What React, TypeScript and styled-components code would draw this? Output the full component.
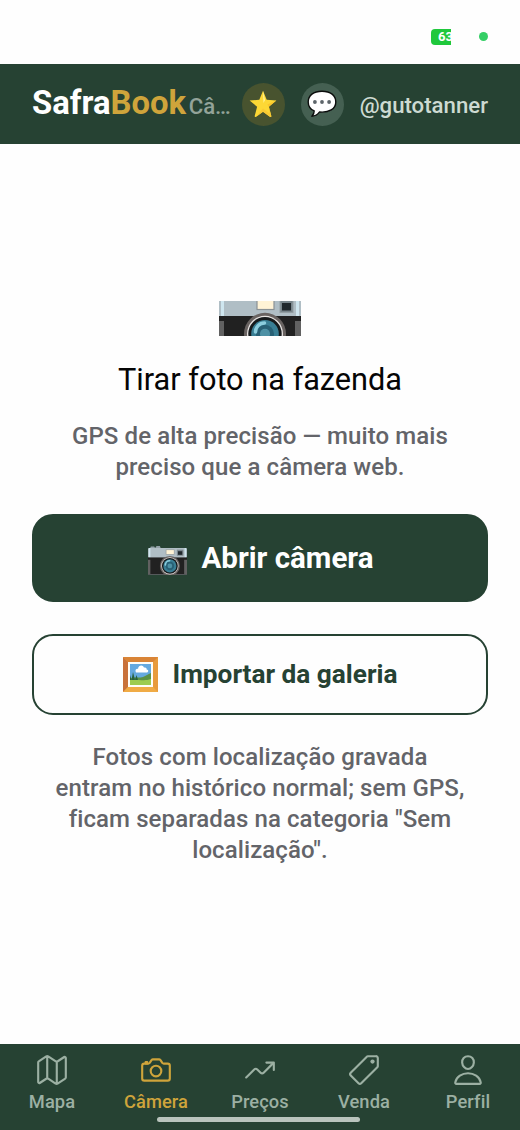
import React from 'react';
import styled, { createGlobalStyle } from 'styled-components';
import {
  IoMapOutline,
  IoCameraOutline,
  IoTrendingUpOutline,
  IoPricetagOutline,
  IoPersonOutline,
} from 'react-icons/io5';

const green = '#264233';
const gold = '#cfa43b';
const muted = '#9cb0a3';

const GlobalStyle = createGlobalStyle`
  * { box-sizing: border-box; }
  body { margin: 0; background: #fefefe; font-family: Roboto, 'Liberation Sans', sans-serif; }
`;

const Screen = styled.div`
  width: 520px;
  height: 1130px;
  display: flex;
  flex-direction: column;
  background: #fefefe;
  overflow: hidden;
`;

const StatusBar = styled.div`
  height: 64px;
  flex: none;
  display: flex;
  align-items: center;
  justify-content: flex-end;
  gap: 28px;
  padding: 9px 32px 0 0;
`;

const Battery = styled.div`
  width: 20px;
  height: 16px;
  padding-left: 7px;
  border-radius: 4px 0 0 4px;
  background: #1fc83c;
  color: #fff;
  font-size: 13px;
  font-weight: 700;
  line-height: 16px;
  overflow: hidden;
  white-space: nowrap;
`;

const PrivacyDot = styled.div`
  width: 9px;
  height: 9px;
  border-radius: 50%;
  background: #35cf66;
`;

const Header = styled.header`
  height: 80px;
  flex: none;
  display: flex;
  align-items: center;
  padding: 0 32px;
  background: ${green};
  white-space: nowrap;
`;

const Brand = styled.div`
  width: 155px;
  margin-top: -2px;
  color: #fff;
  font-size: 32.8px;
  font-weight: 700;
  line-height: 40px;
`;

const BrandAccent = styled.span`
  color: ${gold};
`;

const Section = styled.div`
  width: 55px;
  flex: none;
  padding-left: 2px;
  color: #93a399;
  font-size: 22.2px;
  font-weight: 500;
  line-height: 30px;
  margin-top: 3px;
`;

const RoundButton = styled.button<{ $tint: string }>`
  width: 43px;
  height: 43px;
  flex: none;
  display: flex;
  align-items: center;
  justify-content: center;
  margin: 0 16px 0 0;
  padding: 0;
  border: 0;
  border-radius: 50%;
  background: ${(p) => p.$tint};
`;

const Handle = styled.div`
  margin: 1px 0 0 auto;
  color: #cddad2;
  font-size: 22.2px;
  font-weight: 500;
  line-height: 30px;
`;

const Main = styled.main`
  height: 900px;
  flex: none;
  display: flex;
  flex-direction: column;
  align-items: center;
  padding: 157px 32px 0;
`;

const Hero = styled.div`
  height: 35px;
  display: flex;
`;

const Title = styled.h1`
  margin: 24px 0 0;
  font-size: 30.7px;
  font-weight: 400;
  line-height: 40px;
  color: #050505;
`;

const Copy = styled.p<{ $top: number }>`
  margin: ${(p) => p.$top}px 0 0;
  color: #636469;
  font-size: 24px;
  font-weight: 500;
  letter-spacing: 0.09px;
  line-height: 30.7px;
  text-align: center;
  white-space: nowrap;
`;

const Action = styled.button<{ $outlined?: boolean }>`
  width: 456px;
  height: ${(p) => (p.$outlined ? 81 : 88)}px;
  flex: none;
  display: flex;
  align-items: center;
  justify-content: center;
  gap: 15px;
  margin: 32px 0 0;
  padding: ${(p) => (p.$outlined ? '0 0 1px' : '0 0 0 1px')};
  border: 2px solid ${green};
  border-radius: 21px;
  background: ${(p) => (p.$outlined ? '#fefefe' : green)};
  color: ${(p) => (p.$outlined ? green : '#fff')};
  font-family: inherit;
  font-size: ${(p) => (p.$outlined ? 26.2 : 29.5)}px;
  font-weight: 700;
`;

const ActionIcon = styled.span`
  display: flex;
  padding-top: 4px;
`;

const Nav = styled.nav`
  position: relative;
  height: 86px;
  flex: none;
  display: flex;
  background: ${green};
`;

const Tab = styled.div<{ $active?: boolean }>`
  width: 104px;
  display: flex;
  flex-direction: column;
  align-items: center;
  padding-top: 9px;
  color: ${(p) => (p.$active ? gold : muted)};
  font-size: 18.3px;
  font-weight: 500;
  letter-spacing: 0.1px;
  line-height: 24px;
  svg { margin-bottom: 3px; }
`;

const HomeIndicator = styled.div`
  position: absolute;
  left: 157px;
  top: 73px;
  width: 203px;
  height: 5px;
  border-radius: 3px;
  background: #b9c4bd;
`;

function Camera({ width, height, viewBox }: { width: number; height: number; viewBox: string }) {
  return (
    <svg width={width} height={height} viewBox={viewBox}>
      <path d="M4 5 6 1h7l2 3 3-4h7l2 5z" fill="#93a1a8" />
      <rect y="4" width="82" height="21" rx="2" fill="#b0bec5" />
      <path d="M2 4h3v20H2zM77 4h3v20h-3z" fill="#cfe6ef" />
      <rect y="24" width="82" height="37" fill="#212121" />
      <path d="M0 29h5v30H0zM76 29h6v30h-6z" fill="#616161" />
      <path d="M0 59h82v3H0z" fill="#55595b" />
      <rect x="38" y="8" width="17" height="9.5" fill="#fff3d6" stroke="#8b9295" strokeWidth="1.2" />
      <rect x="61" y="8" width="13" height="12.5" fill="#78858b" stroke="#929da2" />
      <rect x="63" y="11" width="9" height="7.5" fill="#20282c" />
      <circle cx="46" cy="41.8" r="21" fill="#696361" />
      <circle cx="46" cy="41.8" r="18" fill="#e9e5e3" />
      <circle cx="46" cy="41.8" r="16.7" fill="#161a1c" />
      <circle cx="46" cy="41.8" r="13.8" fill="#397e94" />
      <circle cx="46" cy="41.8" r="9" fill="#286075" />
      <circle cx="46" cy="41.8" r="5" fill="#4e91a5" />
      <path d="M36.5 40c0-5 4-9 9-9" fill="none" stroke="#8ccddd" strokeWidth="3.5" strokeLinecap="round" />
    </svg>
  );
}

function Star() {
  return (
    <svg width="28" height="28" viewBox="0 0 28 28">
      <path d="m14 .8 3.700 9 9.700.7-7.500 6.200 2.400 9.400c.2.8-.5 1.200-1.100.8L14 21.700l-7.200 5.200c-.6.4-1.300-.1-1.100-.8l2.400-9.400L.6 10.500l9.700-.7z" fill="#fdd835" />
      <path d="m14 1 2 9-1.500 3z" fill="#fff59d" />
      <path d="m19.900 16.700 2.400 9.400c.2.8-.5 1.200-1.100.8L14 21.700l-7.200 5.200 7.200-8.500 6.500 5z" fill="#f9c933" />
      <path d="m27.200 10.600-7.300 6.100-1.600-2.200z" fill="#f9c52c" />
    </svg>
  );
}

function Bubble() {
  return (
    <svg width="30" height="28" viewBox="0 0 30 28">
      <path
        d="M15 1.200C6.500 1.200 1.200 5.500 1.200 11.900c0 4 2.200 7.300 6 9 .1 2-.8 3.800-2.300 5.300 3.300-.3 6-1.800 7.500-4.200 9.600 1 16.400-3.200 16.400-10.100C28.800 5.500 23.500 1.200 15 1.200z"
        fill="#fff" stroke="#0b0d0c" strokeWidth="1.4" strokeLinejoin="round"
      />
      <circle cx="7.900" cy="12" r="1.900" fill="#5d656a" />
      <circle cx="15" cy="12" r="1.900" fill="#5d656a" />
      <circle cx="22.100" cy="12" r="1.900" fill="#5d656a" />
    </svg>
  );
}

function FramedPicture() {
  return (
    <svg width="35" height="35" viewBox="0 0 35 35">
      <path d="M0 0h35v35H0z" fill="#e89b3c" />
      <path d="M0 0l5 5v25l-5 5z" fill="#c9713a" />
      <path d="M0 0h35l-5 5H5z" fill="#d98436" />
      <path d="M0 35h35l-5-5H5z" fill="#f0ab45" />
      <path d="M5 5h25v25H5z" fill="#fffdf7" />
      <path d="M7 7h21v21H7z" fill="#65a9df" />
      <path d="M13 15.500c-1.500-3 1-4 2-3.600.5-4 5-4.300 6-1.300 2-.8 3 1 2.600 2 2.400.2 2 3 0 3z" fill="#fff" />
      <path d="M7 21c7-1 10 0 13-1s5-3 8-4v12H7z" fill="#5b9145" />
      <path d="M7 23c7-2 12 2 21-1v6H7z" fill="#9ccc50" />
      <path d="m7 23 0-5 1.500 5zM8.500 23 10 15l2 8zM12 23l1.500-5 1.500 5z" fill="#27613f" />
    </svg>
  );
}

const tabs = [
  { label: 'Mapa', Icon: IoMapOutline },
  { label: 'Câmera', Icon: IoCameraOutline, active: true },
  { label: 'Preços', Icon: IoTrendingUpOutline },
  { label: 'Venda', Icon: IoPricetagOutline },
  { label: 'Perfil', Icon: IoPersonOutline },
];

export default function App() {
  return (
    <Screen>
      <GlobalStyle />
      <StatusBar>
        <Battery>63</Battery>
        <PrivacyDot />
      </StatusBar>
      <Header>
        <Brand>Safra<BrandAccent>Book</BrandAccent></Brand>
        <Section>Câ…</Section>
        <RoundButton $tint="#48532f"><Star /></RoundButton>
        <RoundButton $tint="#456052"><Bubble /></RoundButton>
        <Handle>@gutotanner</Handle>
      </Header>
      <Main>
        <Hero><Camera width={82} height={35} viewBox="0 9 82 35" /></Hero>
        <Title>Tirar foto na fazenda</Title>
        <Copy $top={21}>GPS de alta precisão — muito mais<br />preciso que a câmera web.</Copy>
        <Action>
          <ActionIcon><Camera width={39} height={29.5} viewBox="0 0 82 62" /></ActionIcon>
          Abrir câmera
        </Action>
        <Action $outlined><FramedPicture />Importar da galeria</Action>
        <Copy $top={27}>
          Fotos com localização gravada<br />entram no histórico normal; sem GPS,<br />
          ficam separadas na categoria "Sem<br />localização".
        </Copy>
      </Main>
      <Nav>
        {tabs.map(({ label, Icon, active }) => (
          <Tab key={label} $active={active}><Icon size={34} />{label}</Tab>
        ))}
        <HomeIndicator />
      </Nav>
    </Screen>
  );
}
